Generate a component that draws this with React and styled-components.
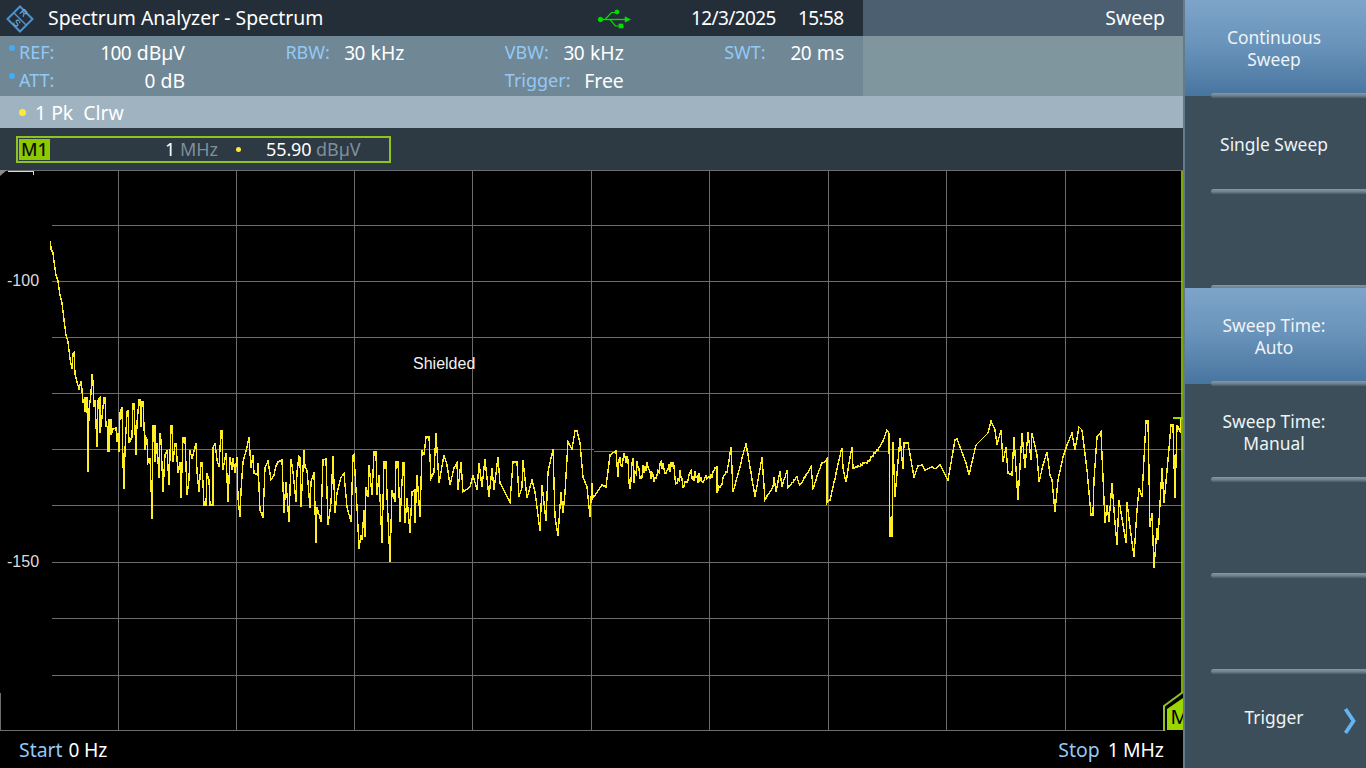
import React from "react";
import styled, { createGlobalStyle } from "styled-components";

const Global = createGlobalStyle`
  html, body { margin: 0; padding: 0; background: #000; }
  body { font-family: "Noto Sans", "Open Sans", sans-serif; }
`;

const Screen = styled.div`
  width: 1366px; height: 768px; display: flex; overflow: hidden; color: #fff;
  font-size: 19.4px; background: #000;
`;
const Num = styled.span`
  font-size: 19px; letter-spacing: -0.62px; margin-right: ${p => p.$gap || 0}px;
`;
const Main = styled.div`
  width: 1183px; flex: none; display: flex; flex-direction: column;
`;
const TitleBar = styled.div`
  height: 36px; box-sizing: border-box; padding-bottom: 2px; display: flex;
  background: linear-gradient(90deg, #242e38 0 863px, #4b5f70 863px);
  align-items: center;
`;
const Logo = styled.svg`
  width: 28px; height: 28px; flex: none; margin-left: 6px; margin-top: 3px;
`;
const Title = styled.div`
  margin-left: 14px; width: 549px; flex: none; white-space: nowrap;
`;
const UsbIcon = styled.svg`
  width: 34px; height: 20px; flex: none; margin-top: 3px;
`;
const DateText = styled.div`
  margin-left: 60px; width: 107px; flex: none;
`;
const TimeText = styled.div`
  width: 45px; flex: none; white-space: nowrap;
`;
const Section = styled.div`
  margin-left: auto; padding-right: 18px;
`;
const InfoBar = styled.div`
  height: 60px; display: grid; grid-template-columns: 166px 119px 119px 120px;
  grid-template-rows: 28px 28px; column-gap: 100.4px; align-content: center;
  padding-left: 19px; background: linear-gradient(90deg, #708795 0 863px, #80969f 863px);
`;
const InfoCell = styled.div`
  display: flex; justify-content: space-between; align-items: center; white-space: nowrap;
`;
const Label = styled.span`
  position: relative; color: #93c9f5; font-size: ${p => p.$size || 18}px; margin-right: ${p => p.$gap || 0}px;
`;
const Bullet = styled.i`
  position: absolute; left: -10px; top: 5px; width: 6px; height: 6px; border-radius: 50%;
  background: #45adf5;
`;
const TraceBar = styled.div`
  height: 32px; display: flex; align-items: center; background: #a0b3c1; padding-left: 19px;
`;
const TraceDot = styled.i`
  width: ${p => p.$size}px; height: ${p => p.$size}px; border-radius: 50%; background: #ffe83a; flex: none;
`;
const TraceText = styled.span`
  margin-left: 9px; white-space: pre;
`;
const MarkerBar = styled.div`
  height: 42px; display: flex; align-items: center; background: #2d3943; padding: 0 0 0 16px;
  box-sizing: border-box; font-size: 18px;
`;
const MarkerBox = styled.div`
  width: 375px; height: 27px; box-sizing: border-box; border: 2px solid #8fc31f; padding: 1px;
  display: flex; align-items: stretch;
`;
const MarkerTag = styled.span`
  width: 31px; flex: none; background: #8ec800; color: #0c1200; text-align: center; line-height: 21px;
  font-size: 18px; font-weight: 500;
`;
const MarkerFreq = styled.span`
  width: 168px; flex: none; text-align: right; line-height: 21px; white-space: pre;
`;
const Muted = styled.span`
  color: #7d8f9b;
`;
const MarkerDotWrap = styled.span`
  width: 40px; flex: none; display: flex; align-items: center; justify-content: center;
`;
const MarkerValue = styled.span`
  margin-left: 8px; line-height: 21px; white-space: pre; letter-spacing: -0.1px;
`;
const Plot = styled.div`
  position: relative; height: 561px; flex: none; background: #000;
`;
const PlotSvg = styled.svg`
  display: block; width: 1183px; height: 561px;
`;
const AxisLabel = styled.span`
  position: absolute; left: 7px; top: ${p => p.$top}px; font: 16px "Liberation Sans", Arial, sans-serif;
  color: #dcdcdc; line-height: 18px;
`;
const Note = styled.span`
  position: absolute; left: 413px; top: 185px; font: 16px "Liberation Sans", Arial, sans-serif;
  color: #f0f0f0; line-height: 18px;
`;
const Footer = styled.div`
  height: 37px; flex: none; display: flex; align-items: center; justify-content: space-between;
  padding: 0 19px 0 19px; background: #000;
`;
const Side = styled.div`
  width: 183px; flex: none; box-sizing: border-box; border-left: 2px solid #647b8b; background: #3b4e5a;
  display: grid; grid-template-rows: repeat(8, 96px);
`;
const SoftKey = styled.div`
  position: relative; display: flex; align-items: center; justify-content: center; text-align: center;
  padding: 0 3px 0 0; box-sizing: border-box; font-size: 17.4px; line-height: 22px; color: #eef3f6;
  background: ${p => p.$active ? "linear-gradient(180deg, #7ea4c9 0%, #6a94bb 45%, #48759f 100%)" : "transparent"};
  &:not(:last-child)::after {
    content: ""; position: absolute; left: 26px; right: 0; bottom: -2px; height: 5px;
    border-radius: 3px 0 0 3px; background: linear-gradient(180deg, #8499a6 0%, #6d8491 50%, #4a5c68 100%);
  }
  &:last-child { padding: 0 3px 6px 0; }
`;
const Chevron = styled.svg`
  position: absolute; right: 9px; top: 35px; width: 14px; height: 28px;
`;

const vLines = [118, 236, 354, 472, 591, 709, 828, 946, 1065];
const hLines = [225, 281, 337, 393, 505, 562, 618, 675];

const raw = `50.5,241 51,249 53,253 54,262 56,275 58,281 60,295 62,303 64,320 66,335 68,342 70,359 72,369 73,353 74,352 75,374 77,382 79,389 81,381 82,390 83,403 85,397 85,412 87,397 88,472 89,410 91,393 92,374 93,381 94,407 95,400 97,447 98,400 100,398 100,433 102,417 104,398 105,398 106,426 108,427 108,451 109,451 109,420 111,420 111,435 113,429 116,428 117,442 118,433 119,452 120,413 122,407 123,463 124,489 125,450 127,412 128,410 129,443 132,437 133,404 134,404 136,455 137,423 139,400 140,400 141,427 142,402 143,402 145,450 146,438 147,440 148,462 150,458 151,485 152,519 153,426 155,426 155,462 157,443 159,478 160,433 161,440 163,492 165,455 167,450 169,485 171,426 172,426 173,462 175,444 176,444 178,473 180,462 181,498 183,438 185,438 187,495 189,480 190,450 192,459 196,443 197,472 199,492 201,463 202,463 204,505 206,505 207,473 209,480 210,505 213,505 213,448 215,443 217,460 219,467 221,431 222,431 223,470 226,453 228,502 230,457 232,470 233,458 235,473 237,457 238,498 240,517 241,491 243,462 247,447 249,437 251,468 253,455 254,473 257,475 258,463 260,510 263,518 265,468 268,461 271,480 274,475 276,466 278,462 282,460 284,513 286,482 289,522 291,459 293,472 296,502 297,472 299,456 300,457 301,507 304,450 305,467 307,470 310,508 311,482 314,472 316,543 317,507 321,522 323,460 326,459 328,525 331,503 333,456 335,513 337,493 341,477 344,474 347,507 351,522 353,456 354,455 357,507 359,549 361,535 362,540 364,510 365,537 366,487 368,497 369,465 372,495 374,452 376,452 377,495 379,475 382,543 384,462 386,462 387,495 390,562 392,490 395,502 396,462 398,462 400,522 403,463 404,463 405,523 407,498 410,533 412,492 415,490 415,523 417,475 420,517 422,450 424,455 426,437 429,437 431,478 434,472 436,433 439,483 444,455 447,465 450,485 454,468 457,463 458,490 461,462 463,492 470,487 473,475 477,490 479,463 482,487 485,459 489,497 492,468 494,490 498,457 500,483 510,502 513,462 517,462 519,497 522,487 523,460 527,498 532,480 535,492 540,531 542,485 546,521 548,472 553,449 555,517 558,536 561,492 563,513 565,493 568,442 572,449 575,431 577,431 580,443 583,477 587,487 590,517 592,483 593,498 602,485 606,487 610,455 616,451 618,477 620,457 623,460 627,457 630,489 633,458 634,483 637,461 642,478 643,465 653,475 654,482 663,463 665,473 673,463 677,483 680,470 683,487 690,473 700,480 710,478 717,467 717,493 727,472 731,447 733,492 740,467 746,443 755,497 762,457 765,500 773,487 774,477 776,492 780,471 782,487 787,470 788,488 797,477 800,485 811,467 813,488 821,465 827,459 827,503 830,500 842,448 843,468 846,482 852,447 853,468 867,463 877,450 878,450 883,441 887,430 889,433 890,536 892,536 893,442 895,497 900,438 903,469 904,443 908,443 914,477 918,466 922,465 925,470 932,467 935,469 940,465 948,480 955,440 957,439 966,463 969,475 976,445 988,433 991,421 995,430 997,445 1001,430 1003,462 1006,447 1008,473 1012,475 1014,437 1018,500 1022,433 1025,468 1028,432 1031,460 1032,433 1037,455 1039,482 1043,465 1047,452 1050,475 1052,480 1055,512 1058,480 1063,457 1067,445 1072,433 1075,450 1079,427 1082,430 1087,470 1091,515 1093,515 1094,480 1097,437 1101,432 1105,523 1107,505 1109,522 1112,483 1115,523 1117,545 1119,500 1126,543 1127,502 1130,527 1134,557 1137,510 1139,488 1142,497 1146,421 1148,421 1150,527 1152,513 1154,568 1157,528 1158,540 1162,468 1164,503 1168,460 1171,425 1173,425 1175,498 1177,425 1180,431 1181,418`;

const jitterAmount = x => {
  if (x > 617 && x < 652) return 9;
  if (x >= 652 && x < 700) return 6;
  if (x >= 700 && x < 730) return 3;
  if (x > 740 && x < 830) return 1;
  if (x > 833 && x < 880) return 1.5;
  return 0;
};

function buildTrace() {
  const pts = raw.split(" ").map(s => s.split(",").map(Number));
  const out = [];
  let seed = 17;
  for (let i = 0; i < pts.length; i++) {
    const [x, y] = pts[i];
    out.push([x, y]);
    const next = pts[i + 1];
    if (!next) break;
    const n = Math.floor(next[0] - x);
    for (let k = 1; k < n; k++) {
      const t = k / n;
      const px = x + k;
      seed = (seed * 73 + 41) % 101;
      const a = jitterAmount(px);
      out.push([px, y + (next[1] - y) * t + (seed / 101 - 0.5) * 2 * a]);
    }
  }
  return out.map(([x, y]) => `${x},${y.toFixed(1)}`).join(" ");
}
const trace = buildTrace();

function RsLogo() {
  return (
    <Logo viewBox="0 0 28 28">
      <path d="M14 1.5 26.5 14 14 26.5 1.5 14Z" fill="none" stroke="#4c93cf" strokeWidth="2" />
      <path d="M7.5 7.5 20.5 20.5" stroke="#4c93cf" strokeWidth="1.4" />
      <text x="17.5" y="11" fontSize="9.5" fill="#7db8e6" fontFamily="Liberation Sans" textAnchor="middle" transform="rotate(45 17.5 8)">R</text>
      <text x="10.5" y="21" fontSize="9.5" fill="#7db8e6" fontFamily="Liberation Sans" textAnchor="middle" transform="rotate(45 10.5 18)">S</text>
    </Logo>
  );
}

function Usb() {
  return (
    <UsbIcon viewBox="596 8 34 20">
      <g fill="#00e000" stroke="#00e000">
        <circle cx="599.5" cy="18.5" r="2.2" />
        <path d="M600 18.5H625" strokeWidth="1.3" />
        <path d="M624 15.8 629.5 18.5 624 21.2Z" strokeWidth="0.5" />
        <path d="M604 18.5 610.5 11.5H615" fill="none" strokeWidth="1.2" />
        <circle cx="616" cy="11" r="2" />
        <path d="M609 18.5 614.5 25H618" fill="none" strokeWidth="1.2" />
        <rect x="618" y="23" width="4" height="4" strokeWidth="0.6" />
      </g>
    </UsbIcon>
  );
}

function Info({ label, num, unit, bullet }) {
  return (
    <InfoCell>
      <Label>{bullet && <Bullet />}{label}</Label>
      <span>{num && <Num $gap={1.5}>{num} </Num>}{unit}</span>
    </InfoCell>
  );
}

function Chart() {
  return (
    <PlotSvg viewBox="0 170 1183 561">
      <g stroke="#6c6c6c" strokeWidth="1" shapeRendering="crispEdges">
        <path d="M0 170.5H1183" />
        <path d="M0 730.5H1183" />
        <path d="M0.5 693V731" />
        {vLines.map(x => <path key={x} d={`M${x}.5 170V731`} />)}
        {hLines.map(y => <path key={y} d={`M52 ${y}.5H1183`} />)}
        <path d="M52 449.5H594M594 451.5H888M888 449.5H1183" />
      </g>
      <path d="M0 176V170H7Z" fill="#8a8a8a" />
      <polyline points={trace} fill="none" stroke="#ffee22" strokeWidth="1.4" strokeLinejoin="miter" shapeRendering="crispEdges" />
      <path d="M8 171.5H33.5V175" fill="none" stroke="#ffee22" strokeWidth="1" shapeRendering="crispEdges" />
      <path d="M1173 418H1183" stroke="#9bd600" strokeWidth="2" />
      <path d="M1182 171V731" stroke="#9bd600" strokeWidth="1.6" />
      <path d="M1183 692 1164 706V729Q1164 733 1168 733H1183" fill="#000" stroke="#8fc31f" strokeWidth="2" />
      <path d="M1183 698 1167 709V730H1183Z" fill="#9bd600" />
      <text x="1170.5" y="724" fontSize="20" fill="#000" fontFamily="Noto Sans">M</text>
    </PlotSvg>
  );
}

export default function App() {
  return (
    <Screen>
      <Global />
      <Main>
        <TitleBar>
          <RsLogo />
          <Title>Spectrum Analyzer - Spectrum</Title>
          <Usb />
          <DateText><Num>12/3/2025</Num></DateText>
          <TimeText><Num>15:58</Num></TimeText>
          <Section>Sweep</Section>
        </TitleBar>
        <InfoBar>
          <Info bullet label="REF:" num="100" unit="dBµV" />
          <Info label="RBW:" num="30" unit="kHz" />
          <Info label="VBW:" num="30" unit="kHz" />
          <Info label="SWT:" num="20" unit="ms" />
          <Info bullet label="ATT:" num="0" unit="dB" />
          <span />
          <Info label="Trigger:" unit="Free" />
          <span />
        </InfoBar>
        <TraceBar>
          <TraceDot $size={7} />
          <TraceText>1 Pk  Clrw</TraceText>
        </TraceBar>
        <MarkerBar>
          <MarkerBox>
            <MarkerTag>M1</MarkerTag>
            <MarkerFreq>1 <Muted>MHz</Muted></MarkerFreq>
            <MarkerDotWrap><TraceDot $size={5} /></MarkerDotWrap>
            <MarkerValue>55.90 <Muted>dBµV</Muted></MarkerValue>
          </MarkerBox>
        </MarkerBar>
        <Plot>
          <Chart />
          <AxisLabel $top={102}>-100</AxisLabel>
          <AxisLabel $top={383}>-150</AxisLabel>
          <Note>Shielded</Note>
        </Plot>
        <Footer>
          <span><Label $size={19.4} $gap={1}>Start</Label> <Num>0</Num> Hz</span>
          <span><Label $size={19.4} $gap={3}>Stop</Label> <Num>1</Num> MHz</span>
        </Footer>
      </Main>
      <Side>
        <SoftKey $active>Continuous<br />Sweep</SoftKey>
        <SoftKey>Single Sweep</SoftKey>
        <SoftKey />
        <SoftKey $active>Sweep Time:<br />Auto</SoftKey>
        <SoftKey>Sweep Time:<br />Manual</SoftKey>
        <SoftKey />
        <SoftKey />
        <SoftKey>
          Trigger
          <Chevron viewBox="0 0 14 28"><path d="M2.5 2 10.5 14 2.5 26" fill="none" stroke="#63b4f2" strokeWidth="3.8" /></Chevron>
        </SoftKey>
      </Side>
    </Screen>
  );
}
